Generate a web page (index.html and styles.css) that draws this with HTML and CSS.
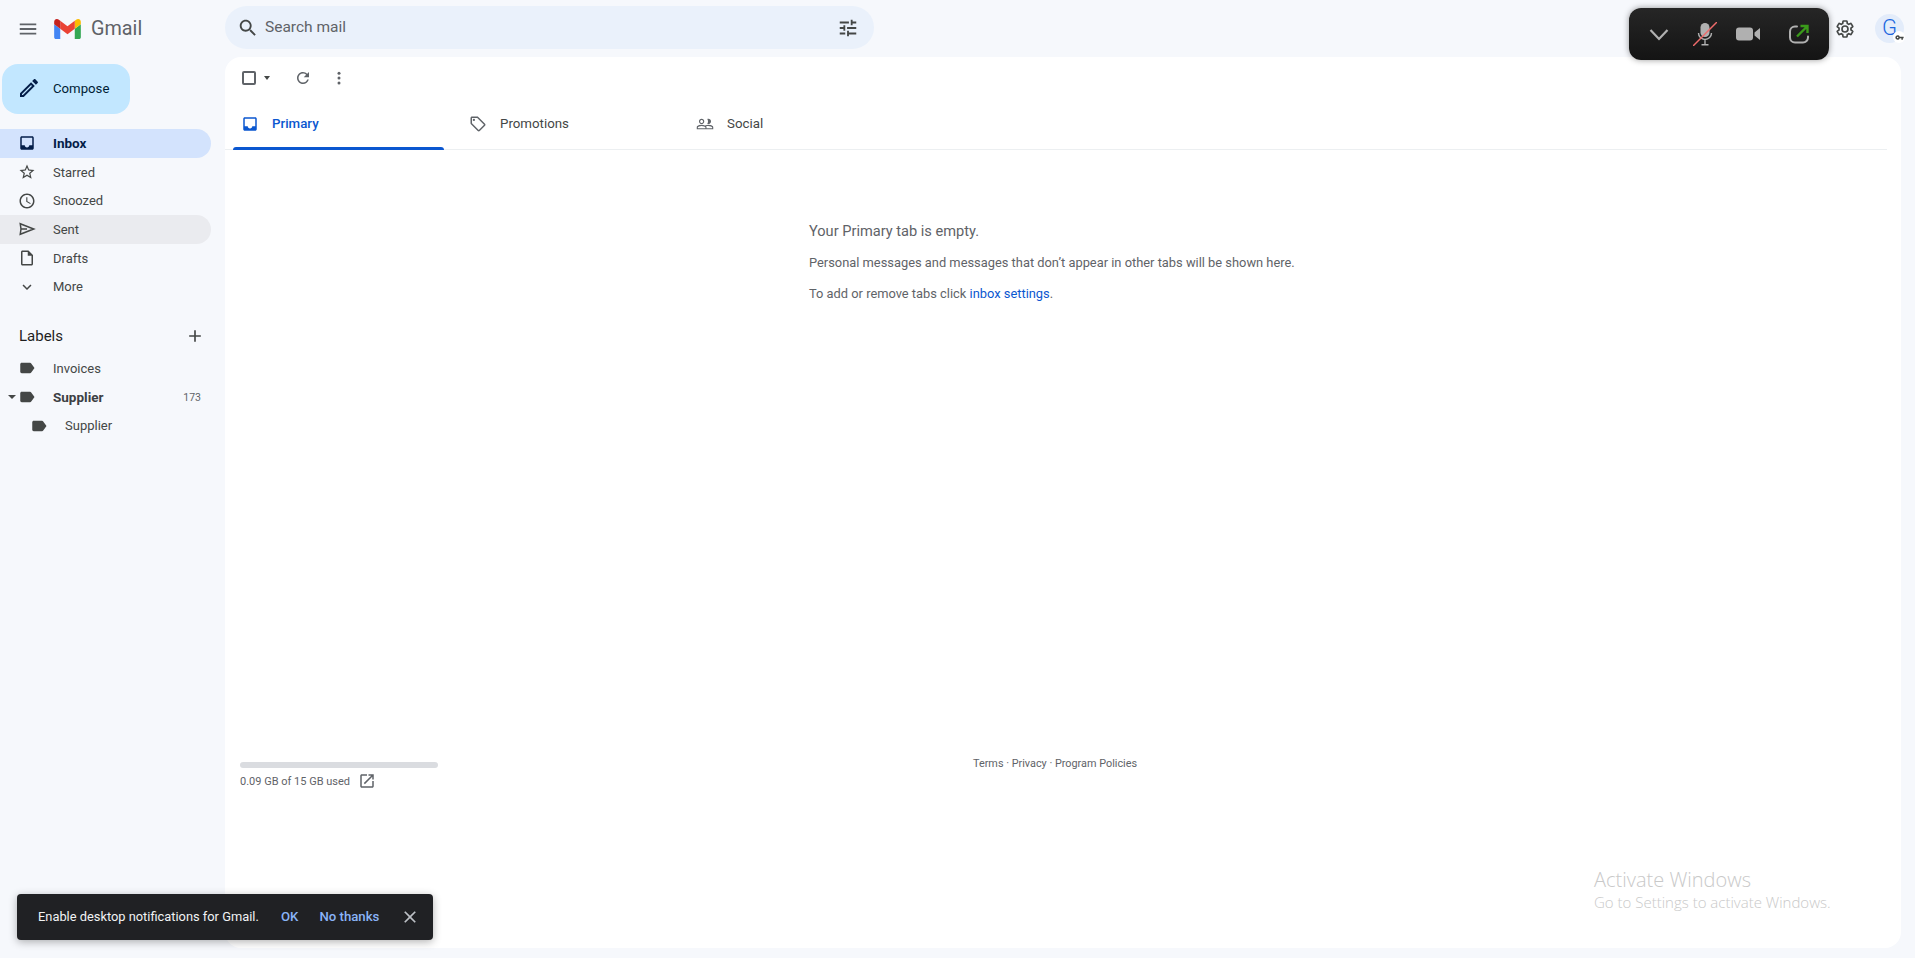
FILE: index.html
```html
<!DOCTYPE html>
<html lang="en">
<head>
    <meta charset="UTF-8">
    <title>Inbox - Gmail</title>
    <link rel="stylesheet" href="styles.css">
</head>
<body>
    <header class="topbar">
        <div class="brand">
            <svg class="icon menu-icon" viewBox="0 0 24 24"><path d="M3 18h18v-2H3v2zm0-5h18v-2H3v2zm0-7v2h18V6H3z"/></svg>
            <svg class="gmail-logo" viewBox="52 42 88 66">
                <path fill="#4285f4" d="M58 108h14V74L52 59v43c0 3.32 2.69 6 6 6"/>
                <path fill="#34a853" d="M120 108h14c3.32 0 6-2.69 6-6V59l-20 15"/>
                <path fill="#fbbc04" d="M120 48v26l20-15v-8c0-7.42-8.47-11.65-14.4-7.2"/>
                <path fill="#ea4335" d="M72 74V48l24 18 24-18v26L96 92"/>
                <path fill="#c5221f" d="M52 51v8l20 15V48l-5.6-4.2c-5.94-4.45-14.4-.22-14.4 7.2"/>
            </svg>
            <span class="gmail-word">Gmail</span>
        </div>
        <div class="search">
            <svg class="icon search-icon" viewBox="0 0 24 24"><path d="M15.5 14h-.79l-.28-.27C15.41 12.59 16 11.11 16 9.5 16 5.91 13.09 3 9.5 3S3 5.91 3 9.5 5.91 16 9.5 16c1.61 0 3.09-.59 4.23-1.57l.27.28v.79l5 4.99L20.49 19l-4.99-5zm-6 0C7.01 14 5 11.99 5 9.5S7.01 5 9.5 5 14 7.01 14 9.5 11.99 14 9.5 14z"/></svg>
            <span class="search-text">Search mail</span>
            <svg class="icon tune-icon" viewBox="0 0 24 24"><path d="M3 17v2h6v-2H3zM3 5v2h10V5H3zm10 16v-2h8v-2h-8v-2h-2v6h2zM7 9v2H3v2h4v2h2V9H7zm14 4v-2H11v2h10zm-6-4h2V7h4V5h-4V3h-2v6z"/></svg>
        </div>
        <div class="account">
            <svg class="icon gear-icon" viewBox="0 0 24 24"><path d="M19.14 12.94c.04-.3.06-.61.06-.94 0-.32-.02-.64-.07-.94l2.03-1.58c.18-.14.23-.41.12-.61l-1.92-3.32c-.12-.22-.37-.29-.59-.22l-2.39.96c-.5-.38-1.03-.7-1.62-.94l-.36-2.54c-.04-.24-.24-.41-.48-.41h-3.84c-.24 0-.43.17-.47.41l-.36 2.54c-.59.24-1.13.57-1.62.94l-2.39-.96c-.22-.08-.47 0-.59.22L2.74 8.87c-.12.21-.08.47.12.61l2.03 1.58c-.05.3-.09.63-.09.94s.02.64.07.94l-2.03 1.58c-.18.14-.23.41-.12.61l1.92 3.32c.12.22.37.29.59.22l2.39-.96c.5.38 1.03.7 1.62.94l.36 2.54c.05.24.24.41.48.41h3.84c.24 0 .44-.17.47-.41l.36-2.54c.59-.24 1.13-.56 1.62-.94l2.39.96c.22.08.47 0 .59-.22l1.92-3.32c.12-.22.07-.47-.12-.61l-2.01-1.58zM12 15.6c-1.98 0-3.6-1.62-3.6-3.6s1.62-3.6 3.6-3.6 3.6 1.62 3.6 3.6-1.62 3.6-3.6 3.6z"/></svg>
            <div class="avatar">
                <span class="avatar-g">G</span>
                <span class="avatar-key">
                    <svg viewBox="0 0 24 24"><path d="M12.65 10A6 6 0 1 0 12.65 14H17v4h4v-4h2v-4H12.65zM7 14a2 2 0 1 1 0-4 2 2 0 0 1 0 4z"/></svg>
                </span>
            </div>
        </div>
    </header>

    <div class="layout">
        <aside class="sidebar">
            <button class="compose">
                <svg class="icon" viewBox="0 0 24 24"><path d="M3 17.25V21h3.75L17.81 9.94l-3.75-3.75L3 17.25zM5.92 19H5v-.92l9.06-9.06.92.92L5.92 19zM20.71 5.63l-2.34-2.34c-.2-.2-.45-.29-.71-.29s-.51.1-.7.29l-1.83 1.83 3.75 3.75 1.83-1.83c.39-.39.39-1.02 0-1.41z"/></svg>
                <span>Compose</span>
            </button>
            <nav class="nav">
                <a class="nav-row active">
                    <svg class="icon" viewBox="0 0 24 24"><path d="M19 3H5c-1.1 0-2 .9-2 2v14c0 1.1.9 2 2 2h14c1.1 0 2-.9 2-2V5c0-1.1-.9-2-2-2zm0 12h-4c0 1.66-1.35 3-3 3s-3-1.34-3-3H5V5h14v10z"/></svg>
                    Inbox
                </a>
                <a class="nav-row">
                    <svg class="icon" viewBox="0 0 24 24"><path d="M22 9.24l-7.19-.62L12 2 9.19 8.63 2 9.24l5.46 4.73L5.82 21 12 17.27 18.18 21l-1.63-7.03L22 9.24zM12 15.4l-3.76 2.27 1-4.28-3.32-2.88 4.38-.38L12 6.1l1.71 4.04 4.38.38-3.32 2.88 1 4.28L12 15.4z"/></svg>
                    Starred
                </a>
                <a class="nav-row">
                    <svg class="icon" viewBox="0 0 24 24"><path d="M11.99 2C6.47 2 2 6.48 2 12s4.47 10 9.99 10C17.52 22 22 17.52 22 12S17.52 2 11.99 2zM12 20c-4.42 0-8-3.58-8-8s3.58-8 8-8 8 3.58 8 8-3.58 8-8 8zm.5-13H11v6l5.25 3.15.75-1.23-4.5-2.67z"/></svg>
                    Snoozed
                </a>
                <a class="nav-row hovered">
                    <svg class="icon sent-icon" viewBox="0 0 24 24"><path d="M3 5l18 7-18 7 1-7-1-7zM4 12h8"/></svg>
                    Sent
                </a>
                <a class="nav-row">
                    <svg class="icon" viewBox="0 0 24 24"><path d="M14 2H6c-1.1 0-1.99.9-1.99 2L4 20c0 1.1.89 2 1.99 2H18c1.1 0 2-.9 2-2V8l-6-6zM6 20V4h7v5h5v11H6z"/></svg>
                    Drafts
                </a>
                <a class="nav-row">
                    <svg class="icon" viewBox="0 0 24 24"><path d="M7.41 8.59L12 13.17l4.59-4.58L18 10l-6 6-6-6z"/></svg>
                    More
                </a>
            </nav>
            <div class="labels-head">
                <span>Labels</span>
                <svg class="icon" viewBox="0 0 24 24"><path d="M19 13h-6v6h-2v-6H5v-2h6V5h2v6h6v2z"/></svg>
            </div>
            <nav class="nav">
                <a class="nav-row">
                    <svg class="icon" viewBox="0 0 24 24"><path d="M17.63 5.84C17.27 5.33 16.67 5 16 5L5 5.01C3.9 5.01 3 5.9 3 7v10c0 1.1.9 1.99 2 1.99L16 19c.67 0 1.27-.33 1.63-.84L22 12l-4.37-6.16z"/></svg>
                    Invoices
                </a>
                <a class="nav-row unread">
                    <span class="caret"></span>
                    <svg class="icon" viewBox="0 0 24 24"><path d="M17.63 5.84C17.27 5.33 16.67 5 16 5L5 5.01C3.9 5.01 3 5.9 3 7v10c0 1.1.9 1.99 2 1.99L16 19c.67 0 1.27-.33 1.63-.84L22 12l-4.37-6.16z"/></svg>
                    Supplier
                    <span class="count">173</span>
                </a>
                <a class="nav-row child">
                    <svg class="icon" viewBox="0 0 24 24"><path d="M17.63 5.84C17.27 5.33 16.67 5 16 5L5 5.01C3.9 5.01 3 5.9 3 7v10c0 1.1.9 1.99 2 1.99L16 19c.67 0 1.27-.33 1.63-.84L22 12l-4.37-6.16z"/></svg>
                    Supplier
                </a>
            </nav>
        </aside>

        <main class="mail">
            <div class="toolbar">
                <span class="checkbox"></span>
                <span class="caret small"></span>
                <svg class="icon refresh-icon" viewBox="0 0 24 24"><path d="M17.65 6.35A7.958 7.958 0 0 0 12 4c-4.42 0-7.99 3.58-7.99 8s3.57 8 7.99 8c3.73 0 6.84-2.55 7.73-6h-2.08A5.99 5.99 0 0 1 12 18c-3.31 0-6-2.69-6-6s2.69-6 6-6c1.66 0 3.14.69 4.22 1.78L13 11h7V4l-2.35 2.35z"/></svg>
                <svg class="icon dots-icon" viewBox="0 0 24 24"><circle cx="12" cy="5.5" r="2"/><circle cx="12" cy="12" r="2"/><circle cx="12" cy="18.5" r="2"/></svg>
            </div>
            <div class="tabs">
                <div class="tab selected">
                    <svg class="icon" viewBox="0 0 24 24"><path d="M19 3H5c-1.1 0-2 .9-2 2v14c0 1.1.9 2 2 2h14c1.1 0 2-.9 2-2V5c0-1.1-.9-2-2-2zm0 12h-4c0 1.66-1.35 3-3 3s-3-1.34-3-3H5V5h14v10z"/></svg>
                    Primary
                </div>
                <div class="tab">
                    <svg class="icon" viewBox="0 0 24 24"><path d="M21.41 11.58l-9-9C12.05 2.22 11.55 2 11 2H4c-1.1 0-2 .9-2 2v7c0 .55.22 1.05.59 1.42l9 9c.36.36.86.58 1.41.58s1.05-.22 1.41-.59l7-7c.37-.36.59-.86.59-1.41s-.23-1.06-.59-1.42zM13 20.01L4 11V4h7v-.01l9 9-7 7.02z"/><circle cx="6.5" cy="6.5" r="1.5"/></svg>
                    Promotions
                </div>
                <div class="tab">
                    <svg class="icon" viewBox="0 0 24 24"><path d="M16.5 13c-1.2 0-3.07.34-4.5 1-1.43-.67-3.3-1-4.5-1C5.33 13 1 14.08 1 16.25V19h22v-2.75c0-2.17-4.33-3.25-6.5-3.25zm-4 4.5h-10v-1.25c0-.54 2.56-1.75 5-1.75s5 1.21 5 1.75v1.25zm9 0H14v-1.25c0-.46-.2-.86-.52-1.22.88-.3 1.96-.53 3.02-.53 2.44 0 5 1.21 5 1.75v1.25zM7.5 12c1.93 0 3.5-1.57 3.5-3.5S9.43 5 7.5 5 4 6.57 4 8.5 5.57 12 7.5 12zm0-5.5c1.1 0 2 .9 2 2s-.9 2-2 2-2-.9-2-2 .9-2 2-2zm9 5.5c1.93 0 3.5-1.57 3.5-3.5S18.43 5 16.5 5c-.54 0-1.04.13-1.5.35.63.89 1 1.98 1 3.15s-.37 2.26-1 3.15c.46.22.96.35 1.5.35z"/></svg>
                    Social
                </div>
            </div>
            <section class="empty">
                <h2>Your Primary tab is empty.</h2>
                <p>Personal messages and messages that don’t appear in other tabs will be shown here.</p>
                <p>To add or remove tabs click <a class="link">inbox settings</a>.</p>
            </section>
            <footer class="mail-footer">
                <div class="storage">
                    <div class="storage-bar"></div>
                    <div class="storage-text">
                        0.09 GB of 15 GB used
                        <svg class="icon" viewBox="0 0 24 24"><path d="M19 19H5V5h7V3H5c-1.11 0-2 .9-2 2v14c0 1.1.89 2 2 2h14c1.1 0 2-.9 2-2v-7h-2v7zM14 3v2h3.59l-9.83 9.83 1.41 1.41L19 6.41V10h2V3h-7z"/></svg>
                    </div>
                </div>
                <div class="policies">Terms · Privacy · Program Policies</div>
            </footer>
        </main>
    </div>

    <!-- overlays -->
    <div class="meet-widget">
        <svg viewBox="0 0 24 24" class="meet-chevron"><path d="M3.5 8l8.5 9 8.5-9" fill="none" stroke="#b0b0b0" stroke-width="2.2"/></svg>
        <svg viewBox="0 0 24 24" class="meet-mic">
            <path fill="#b0b0b0" d="M12 15a4.5 4.5 0 0 0 4.5-4.5v-5a4.5 4.5 0 0 0-9 0v5A4.5 4.5 0 0 0 12 15z"/>
            <path fill="none" stroke="#b0b0b0" stroke-width="1.4" d="M5.5 11a6.5 6.5 0 0 0 13 0M12 17.5v5M8.5 22.8h7"/>
            <path stroke="#ee6a6a" stroke-width="1.5" d="M0 24L24 0"/>
        </svg>
        <svg viewBox="0 0 24 24" class="meet-cam"><path fill="#b0b0b0" d="M0 8.5a3 3 0 0 1 3-3h11a3 3 0 0 1 3 3v7a3 3 0 0 1-3 3H3a3 3 0 0 1-3-3v-7zM18.5 10.5L24 6v12l-5.5-4.5z"/></svg>
        <svg viewBox="0 0 24 24" class="meet-share">
            <path fill="none" stroke="#b0b0b0" stroke-width="2" stroke-linecap="round" d="M10 4.5H8a5 5 0 0 0-5 5v6a5 5 0 0 0 5 5h8a5 5 0 0 0 5-5v-1"/>
            <path fill="none" stroke="#3a9a1a" stroke-width="2.4" d="M10 14.5L20 4.5M13.5 4h7v7"/>
        </svg>
    </div>

    <div class="toast">
        <span class="toast-msg">Enable desktop notifications for Gmail.</span>
        <span class="toast-action">OK</span>
        <span class="toast-action">No thanks</span>
        <svg class="toast-close" viewBox="0 0 24 24"><path d="M19 6.41L17.59 5 12 10.59 6.41 5 5 6.41 10.59 12 5 17.59 6.41 19 12 13.41 17.59 19 19 17.59 13.41 12z"/></svg>
    </div>

    <div class="watermark">
        <div class="watermark-title">Activate Windows</div>
        <div class="watermark-sub">Go to Settings to activate Windows.</div>
    </div>
</body>
</html>
```

FILE: styles.css
```css
* {
    box-sizing: border-box;
}
html, body {
    height: 100%;
}
body {
    margin: 0;
    background: #f6f8fc;
    color: #444746;
    font-family: Roboto, "Liberation Sans", sans-serif;
    font-size: 13px;
    overflow: hidden;
}
.icon {
    width: 20px;
    height: 20px;
    fill: #444746;
    flex: none;
    display: block;
}

/* top bar */
.topbar {
    height: 57px;
    display: flex;
    align-items: flex-start;
}
.brand {
    width: 225px;
    height: 57px;
    display: flex;
    align-items: center;
    padding-left: 17px;
}
.menu-icon {
    width: 22px;
    height: 22px;
    fill: #5f6368;
}
.gmail-logo {
    width: 27px;
    height: 20px;
    margin-left: 15px;
}
.gmail-word {
    margin-left: 10px;
    padding-bottom: 1px;
    font-size: 19.8px;
    color: #5f6368;
}
.search {
    width: 649px;
    height: 43px;
    margin-top: 6px;
    border-radius: 22px;
    background: #eaf1fb;
    display: flex;
    align-items: center;
    padding: 0 15px 0 12px;
}
.search-icon {
    width: 22px;
    height: 22px;
}
.search-text {
    margin-left: 6px;
    padding-bottom: 2px;
    font-size: 15.5px;
    color: #5f6368;
    flex: 1;
}
.tune-icon {
    width: 22px;
    height: 22px;
}
.account {
    margin-left: auto;
    height: 57px;
    display: flex;
    align-items: center;
    padding-right: 11px;
}
.gear-icon {
    width: 20px;
    height: 20px;
    fill: none;
    stroke: #444746;
    stroke-width: 2;
}
.avatar {
    position: relative;
    width: 29px;
    height: 29px;
    margin-left: 20px;
    border-radius: 50%;
    background: #e3ecfa;
    display: flex;
    align-items: center;
    justify-content: center;
}
.avatar-g {
    padding-bottom: 2px;
    font-size: 22px;
    font-weight: 300;
    color: #1a66e0;
}
.avatar-key {
    position: absolute;
    right: -1px;
    bottom: 0;
    width: 12px;
    height: 12px;
    border-radius: 50%;
    background: #fff;
    display: flex;
    align-items: center;
    justify-content: center;
}
.avatar-key svg {
    width: 9px;
    height: 9px;
    fill: #444746;
}

/* sidebar */
.layout {
    display: flex;
    height: 891px;
}
.sidebar {
    width: 225px;
    flex: none;
}
.compose {
    display: flex;
    align-items: center;
    width: 128px;
    height: 50px;
    margin: 7px 0 15px 2px;
    padding: 0 0 2px 15px;
    border: 0;
    border-radius: 16px;
    background: #c2e7ff;
    color: #001d35;
    font-family: inherit;
    font-size: 13.2px;
}
.compose .icon {
    width: 24px;
    height: 24px;
    margin-right: 12px;
    fill: #041e49;
}
.nav-row {
    position: relative;
    display: flex;
    align-items: center;
    width: 211px;
    height: 28.7px;
    padding-left: 18px;
    border-radius: 0 15px 15px 0;
    color: #444746;
}
.nav-row .icon {
    width: 18px;
    height: 18px;
    margin-right: 17px;
}
.nav-row .sent-icon {
    fill: none;
    stroke: #444746;
    stroke-width: 2;
}
.nav-row.active {
    background: #d3e3fd;
    color: #041e49;
    font-size: 13.5px;
    font-weight: 700;
}
.nav-row.active .icon {
    fill: #041e49;
}
.nav-row.hovered {
    background: #eaebef;
}
.nav-row.unread {
    font-size: 13.5px;
    font-weight: 700;
    color: #3c4043;
}
.nav-row.child {
    padding-left: 30px;
}
.count {
    position: absolute;
    right: 10px;
    font-size: 10.5px;
    font-weight: 400;
    color: #5f6368;
}
.caret {
    width: 0;
    height: 0;
    border-left: 4px solid transparent;
    border-right: 4px solid transparent;
    border-top: 4px solid #444746;
}
.nav-row .caret {
    position: absolute;
    left: 8px;
    top: 12px;
}
.labels-head {
    display: flex;
    align-items: center;
    justify-content: space-between;
    width: 211px;
    height: 30px;
    margin: 20px 0 3px;
    padding: 0 6px 0 19px;
    font-size: 15px;
    color: #1f1f1f;
}

/* mail panel */
.mail {
    flex: 1;
    height: 891px;
    margin-right: 14px;
    background: #fff;
    border-radius: 16px;
}
.toolbar {
    height: 41px;
    display: flex;
    align-items: center;
    padding-left: 17px;
}
.checkbox {
    width: 14px;
    height: 14px;
    border: 2px solid #5f6368;
    border-radius: 2px;
}
.caret.small {
    margin-left: 8px;
    border-left-width: 3.5px;
    border-right-width: 3.5px;
}
.refresh-icon {
    width: 18px;
    height: 18px;
    margin-left: 24px;
    fill: #5f6368;
}
.dots-icon {
    width: 18px;
    height: 18px;
    margin-left: 18px;
    fill: #5f6368;
}
.tabs {
    height: 52px;
    margin-right: 14px;
    padding-left: 8px;
    display: flex;
    border-bottom: 1px solid #eceff1;
}
.tab {
    position: relative;
    width: 227px;
    display: flex;
    align-items: center;
    padding-left: 25px;
    font-size: 13.3px;
    color: #444746;
}
.tab .icon {
    width: 18px;
    height: 18px;
    margin-right: 13px;
    fill: #5f6368;
}
.tab.selected {
    width: 211px;
    padding-left: 8px;
    color: #0b57d0;
    font-weight: 500;
}
.tab.selected .icon {
    fill: #0b57d0;
}
.tab.selected::after {
    content: "";
    position: absolute;
    left: 0;
    right: 0;
    bottom: -1px;
    height: 3px;
    border-radius: 3px 3px 0 0;
    background: #0b57d0;
}
.empty {
    margin: 71px 0 0 584px;
    color: #5f6368;
    font-size: 12.87px;
}
.empty h2 {
    margin: 0 0 14px;
    font-size: 14.6px;
    font-weight: 400;
    line-height: 20px;
}
.empty p {
    margin: 0 0 15px;
    line-height: 16px;
}
.link {
    color: #0b57d0;
}
.mail-footer {
    margin-top: 460px;
    padding-left: 15px;
    display: flex;
    font-size: 11px;
    color: #5f6368;
}
.storage {
    width: 198px;
}
.storage-bar {
    height: 6px;
    border-radius: 3px;
    background: #dadce0;
}
.storage-text {
    display: flex;
    align-items: center;
    gap: 8px;
    margin-top: 4px;
}
.storage-text .icon {
    width: 18px;
    height: 18px;
    fill: #5f6368;
}
.policies {
    margin: -5px 0 0 535px;
    font-size: 10.85px;
}

/* overlays */
.meet-widget {
    position: absolute;
    left: 1629px;
    top: 8px;
    width: 200px;
    height: 52px;
    border-radius: 12px;
    background: linear-gradient(#262626, #141414);
    box-shadow: 0 0 6px rgba(0, 0, 0, 0.4);
}
.meet-widget svg {
    position: absolute;
    top: 14px;
    width: 24px;
    height: 24px;
}
.meet-chevron { left: 18px; }
.meet-mic { left: 64px; }
.meet-cam { left: 107px; }
.meet-share { left: 158px; }
.toast {
    position: absolute;
    left: 17px;
    top: 894px;
    width: 416px;
    height: 46px;
    border-radius: 4px;
    background: #202124;
    box-shadow: 0 2px 8px rgba(0, 0, 0, 0.3);
    display: flex;
    align-items: center;
    padding: 0 0 1px 21px;
    color: #f1f3f4;
    font-size: 12.85px;
}
.toast-msg {
    width: 243px;
    flex: none;
}
.toast-action {
    color: #8ab4f8;
    font-size: 13.2px;
    font-weight: 500;
    margin-right: 21px;
}
.toast-close {
    width: 20px;
    height: 20px;
    fill: #bdc1c6;
}
.watermark {
    position: absolute;
    left: 1594px;
    top: 866px;
    color: #c9c9c9;
    font-family: "Open Sans", sans-serif;
    font-weight: 300;
}
.watermark-title {
    font-size: 20px;
    line-height: 27px;
}
.watermark-sub {
    font-size: 15px;
    line-height: 19px;
}
```
